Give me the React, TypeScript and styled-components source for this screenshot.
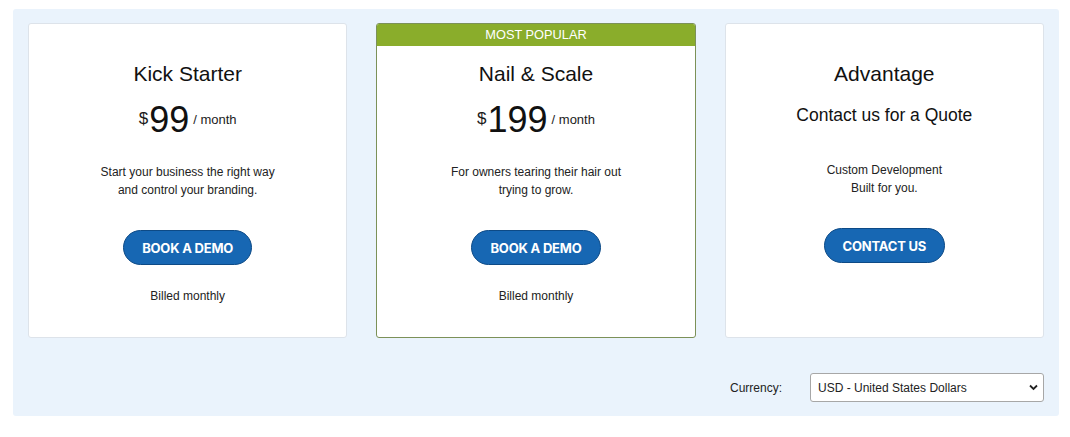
import styled, { createGlobalStyle } from 'styled-components';

const GlobalStyle = createGlobalStyle`
  html, body {
    margin: 0;
    padding: 0;
    background: #ffffff;
    font-family: 'Liberation Sans', Arial, sans-serif;
    color: #1b1b1b;
  }
`;

const Panel = styled.section`
  margin: 9px 11px 0 13px;
  padding: 14px 15px 14px 15px;
  background: #eaf3fc;
  border-radius: 3px;
`;

const CardRow = styled.div`
  display: grid;
  grid-template-columns: repeat(3, 1fr);
  gap: 29px;
`;

const Card = styled.div<{ $featured?: boolean }>`
  display: flex;
  flex-direction: column;
  min-height: 315px;
  box-sizing: border-box;
  background: #ffffff;
  border: 1px solid ${(p) => (p.$featured ? '#7c9158' : '#dde3ea')};
  border-radius: 3px;
  overflow: hidden;
`;

const Ribbon = styled.div`
  height: 22px;
  line-height: 22px;
  background: #8aad2b;
  color: #ffffff;
  font-size: 12.8px;
  text-align: center;
`;

const CardBody = styled.div<{ $top: number }>`
  display: flex;
  flex-direction: column;
  align-items: center;
  padding: ${(p) => p.$top}px 20px 30px;
  text-align: center;
`;

const PlanName = styled.h2`
  margin: 0;
  font-size: 21px;
  line-height: 25px;
  font-weight: 400;
  color: #111;
`;

const PriceRow = styled.div`
  display: flex;
  align-items: flex-start;
  margin-top: 16px;
  height: 36px;
`;

const Dollar = styled.span`
  font-size: 17px;
  line-height: 17px;
  margin-top: 8px;
  margin-right: 1px;
`;

const Amount = styled.span`
  font-size: 36px;
  line-height: 36px;
  color: #111;
`;

const Per = styled.span`
  font-size: 13px;
  line-height: 13px;
  margin-top: 11px;
  margin-left: 4px;
`;

const Quote = styled.div`
  margin-top: 19px;
  font-size: 17.5px;
  line-height: 21px;
  color: #111;
`;

const Blurb = styled.p<{ $gap: number }>`
  margin: ${(p) => p.$gap}px 0 0;
  font-size: 12px;
  line-height: 18px;
  color: #222;
`;

const PillButton = styled.button`
  display: inline-flex;
  align-items: center;
  justify-content: center;
  box-sizing: border-box;
  height: 35px;
  margin-top: 31px;
  padding: 0 18px;
  background: #1767b3;
  border: 1.5px solid #0d4a86;
  border-radius: 18px;
  color: #ffffff;
  font-family: Inter, 'Open Sans', sans-serif;
  font-weight: 700;
  font-size: 13px;
  letter-spacing: -0.2px;
  cursor: pointer;
`;

const Billing = styled.div`
  margin-top: 22px;
  font-size: 12px;
  line-height: 18px;
  color: #222;
`;

const CurrencyBar = styled.div`
  display: flex;
  justify-content: flex-end;
  align-items: center;
  gap: 28px;
  margin-top: 35px;
`;

const CurrencyLabel = styled.label`
  font-size: 12px;
  color: #222;
`;

const SelectWrap = styled.div`
  position: relative;
  width: 234px;
`;

const Select = styled.select`
  appearance: none;
  width: 100%;
  height: 29px;
  box-sizing: border-box;
  padding: 0 24px 0 7px;
  background: #ffffff;
  border: 1px solid #a7a7a7;
  border-radius: 3px;
  font-family: 'Liberation Sans', Arial, sans-serif;
  font-size: 12px;
  color: #222;
`;

const Chevron = styled.svg`
  position: absolute;
  right: 6px;
  top: 11px;
  pointer-events: none;
`;

type Plan = {
  name: string;
  price?: string;
  quote?: string;
  blurb: string[];
  cta: string;
  billed?: boolean;
  featured?: boolean;
};

const plans: Plan[] = [
  {
    name: 'Kick Starter',
    price: '99',
    blurb: ['Start your business the right way', 'and control your branding.'],
    cta: 'BOOK A DEMO',
    billed: true,
  },
  {
    name: 'Nail & Scale',
    price: '199',
    blurb: ['For owners tearing their hair out', 'trying to grow.'],
    cta: 'BOOK A DEMO',
    billed: true,
    featured: true,
  },
  {
    name: 'Advantage',
    quote: 'Contact us for a Quote',
    blurb: ['Custom Development', 'Built for you.'],
    cta: 'CONTACT US',
  },
];

function PlanCard({ plan }: { plan: Plan }) {
  return (
    <Card $featured={plan.featured}>
      {plan.featured && <Ribbon>MOST POPULAR</Ribbon>}
      <CardBody $top={plan.featured ? 15 : 37}>
        <PlanName>{plan.name}</PlanName>
        {plan.price && (
          <PriceRow>
            <Dollar>$</Dollar>
            <Amount>{plan.price}</Amount>
            <Per>/ month</Per>
          </PriceRow>
        )}
        {plan.quote && <Quote>{plan.quote}</Quote>}
        <Blurb $gap={plan.price ? 25 : 35}>
          {plan.blurb[0]}
          <br />
          {plan.blurb[1]}
        </Blurb>
        <PillButton>{plan.cta}</PillButton>
        {plan.billed && <Billing>Billed monthly</Billing>}
      </CardBody>
    </Card>
  );
}

function App() {
  return (
    <>
      <GlobalStyle />
      <Panel>
        <CardRow>
          {plans.map((plan) => (
            <PlanCard key={plan.name} plan={plan} />
          ))}
        </CardRow>
        <CurrencyBar>
          <CurrencyLabel htmlFor="currency">Currency:</CurrencyLabel>
          <SelectWrap>
            <Select id="currency" defaultValue="USD">
              <option value="USD">USD - United States Dollars</option>
              <option value="CAD">CAD - Canadian Dollars</option>
              <option value="EUR">EUR - Euros</option>
            </Select>
            <Chevron width="9" height="7" viewBox="0 0 9 7">
              <path d="M1 1.5 L4.5 5 L8 1.5" fill="none" stroke="#222" strokeWidth="1.8" />
            </Chevron>
          </SelectWrap>
        </CurrencyBar>
      </Panel>
    </>
  );
}

export default App;
